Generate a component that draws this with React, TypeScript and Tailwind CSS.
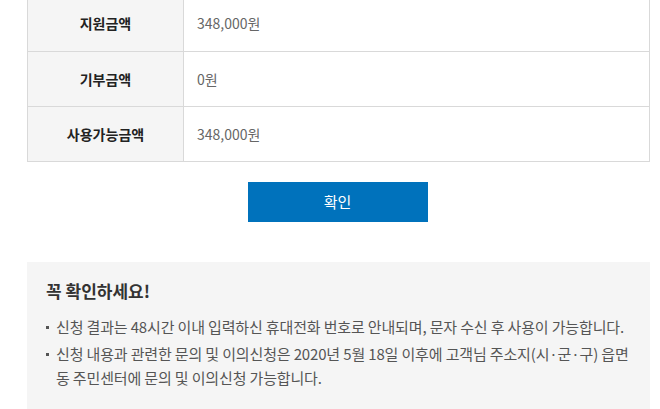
const font = { fontFamily: '"Noto Sans CJK KR", "Noto Sans", sans-serif' };

const rows = [
  { label: '지원금액', value: '348,000원' },
  { label: '기부금액', value: '0원' },
  { label: '사용가능금액', value: '348,000원' },
];

export default function App() {
  return (
    <div className="w-[660px] h-[409px] overflow-hidden bg-white" style={font}>
      <div className="ml-[27px] w-[623px] -mt-[5px]">
        <div className="border border-[#d9d9d9]">
          {rows.map((r, i) => (
            <div
              key={r.label}
              className={`flex h-[55px] ${i > 0 ? 'border-t border-[#d9d9d9]' : ''}`}
            >
              <div className="w-[156px] shrink-0 bg-[#f5f5f5] border-r border-[#d9d9d9] flex items-center justify-center text-[14px] font-bold text-[#222]">
                {r.label}
              </div>
              <div className="flex-1 flex items-center pl-[13px] text-[14px] text-[#666]">
                {r.value}
              </div>
            </div>
          ))}
        </div>

        <div className="flex justify-center mt-[20px] pr-[2px]">
          <button className="w-[180px] h-[40px] bg-[#0072bc] text-white text-[15px]">확인</button>
        </div>

        <div className="mt-[40px] bg-[#f5f5f5] pl-[19px] pr-[18px] pt-[16px] pb-[20px]">
          <h3 className="text-[17px] font-bold text-[#333] leading-[26px]">꼭 확인하세요!</h3>
          <ul className="mt-[11px] text-[15px] text-[#555] leading-[24px] tracking-[-0.15px] break-keep">
            <li className="flex">
              <span className="w-[3px] h-[3px] bg-[#555] mt-[11px] mr-[7px] shrink-0" />
              <span>신청 결과는 48시간 이내 입력하신 휴대전화 번호로 안내되며, 문자 수신 후 사용이 가능합니다.</span>
            </li>
            <li className="flex mt-[3px]">
              <span className="w-[3px] h-[3px] bg-[#555] mt-[11px] mr-[7px] shrink-0" />
              <span>
                신청 내용과 관련한 문의 및 이의신청은 2020년 5월 18일 이후에 고객님 주소지(시·군·구) 읍면 동 주민센터에 문의 및 이의신청 가능합니다.
              </span>
            </li>
          </ul>
        </div>
      </div>
    </div>
  );
}
